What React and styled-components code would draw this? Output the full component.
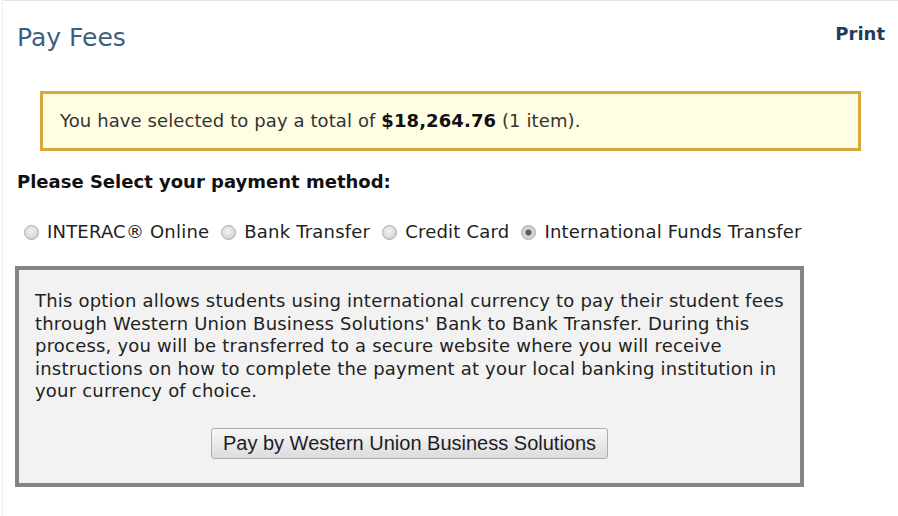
import React, { useState } from "react";
import styled, { createGlobalStyle } from "styled-components";

const GlobalStyle = createGlobalStyle`
  html, body {
    margin: 0;
    padding: 0;
    background: #fff;
  }

  body {
    font-family: "DejaVu Sans", Verdana, sans-serif;
    color: #222;
  }
`;

const Page = styled.div`
  margin-left: 2px;
  min-height: 515px;
  border-top: 1px solid #e4e4e4;
  border-left: 1px solid #ececec;
  padding: 0 13px 0 14px;
`;

const Header = styled.div`
  display: flex;
  justify-content: space-between;
  align-items: flex-start;
  padding-top: 22px;
`;

const Title = styled.h1`
  margin: 0;
  font-size: 25px;
  font-weight: normal;
  line-height: 30px;
  color: #3d5f82;
`;

const PrintLink = styled.a`
  font-size: 18px;
  font-weight: bold;
  line-height: 22px;
  color: #1f3b5e;
  text-decoration: none;
  cursor: pointer;
`;

const Notice = styled.div`
  margin: 38px 24px 0 23px;
  padding: 16px 17px;
  border: 3px solid #d8a83d;
  background: #fffee2;
  font-size: 18px;
  line-height: 22px;
  letter-spacing: 0.1px;
  color: #333;

  strong {
    color: #111;
  }
`;

const Prompt = styled.p`
  margin: 20px 0 0;
  font-size: 18px;
  font-weight: bold;
  line-height: 22px;
  color: #111;
`;

const Methods = styled.div`
  display: flex;
  align-items: center;
  margin-top: 28px;
  padding-left: 7px;
`;

const Option = styled.label`
  display: inline-flex;
  align-items: center;
  gap: 8px;
  margin-right: 12px;
  font-size: 18px;
  line-height: 22px;
  letter-spacing: 0.2px;
  color: #222;
  cursor: pointer;
`;

const Radio = styled.input.attrs({ type: "radio" })`
  appearance: none;
  width: 15px;
  height: 15px;
  margin: 0;
  border-radius: 50%;
  border: 1px solid #ababab;
  background: radial-gradient(circle at 45% 40%, #f2f2f2 0%, #dcdcdc 55%, #c4c4c4 100%);
  cursor: pointer;

  &:checked {
    background: radial-gradient(circle, #5a5a5a 0 2.6px, #d6d6d6 3.4px, #c6c6c6 100%);
  }
`;

const OptionPanel = styled.div`
  box-sizing: border-box;
  width: 789px;
  margin: 23px 0 0 -2px;
  padding: 20px 16px 24px;
  border: 4px solid #848484;
  background: #f2f2f2;
`;

const Description = styled.p`
  margin: 0;
  font-size: 18px;
  line-height: 22.5px;
  letter-spacing: 0.2px;
  color: #222;
  white-space: nowrap;
`;

const ButtonRow = styled.div`
  display: flex;
  justify-content: center;
  margin-top: 25.5px;
`;

const PayButton = styled.button`
  height: 31px;
  padding: 0 11px;
  border: 1px solid #acacac;
  border-radius: 3px;
  background: linear-gradient(#f7f7f7, #dcdcdc);
  font-family: "Liberation Sans", Arial, sans-serif;
  font-size: 20px;
  color: #1c1c28;
  cursor: pointer;
`;

const methods = [
  { id: "interac", label: "INTERAC® Online" },
  { id: "bank", label: "Bank Transfer" },
  { id: "credit", label: "Credit Card" },
  { id: "intl", label: "International Funds Transfer" }
];

const descriptionLines = [
  "This option allows students using international currency to pay their student fees",
  "through Western Union Business Solutions' Bank to Bank Transfer. During this",
  "process, you will be transferred to a secure website where you will receive",
  "instructions on how to complete the payment at your local banking institution in",
  "your currency of choice."
];

export default function App() {
  const [method, setMethod] = useState("intl");

  return (
    <>
      <GlobalStyle />
      <Page>
        <Header>
          <Title>Pay Fees</Title>
          <PrintLink>Print</PrintLink>
        </Header>

        <Notice>
          You have selected to pay a total of <strong>$18,264.76</strong> (1 item).
        </Notice>

        <Prompt>Please Select your payment method:</Prompt>

        <Methods>
          {methods.map(m => (
            <Option key={m.id}>
              <Radio
                name="method"
                checked={method === m.id}
                onChange={() => setMethod(m.id)}
              />
              {m.label}
            </Option>
          ))}
        </Methods>

        <OptionPanel>
          <Description>
            {descriptionLines.map((line, i) => (
              <React.Fragment key={i}>
                {line}
                {i < descriptionLines.length - 1 && <br />}
              </React.Fragment>
            ))}
          </Description>
          <ButtonRow>
            <PayButton>Pay by Western Union Business Solutions</PayButton>
          </ButtonRow>
        </OptionPanel>
      </Page>
    </>
  );
}
